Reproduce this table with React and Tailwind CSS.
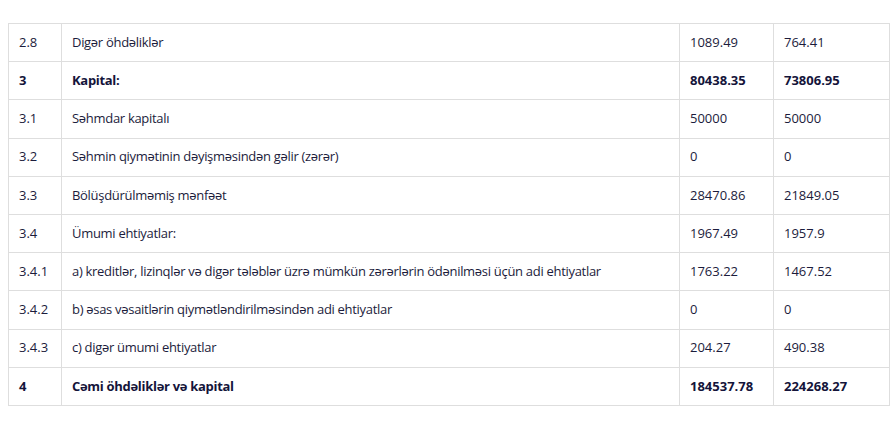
export default function App() {
  const rows = [
    ["2.8", "Digər öhdəliklər", "1089.49", "764.41", false],
    ["3", "Kapital:", "80438.35", "73806.95", true],
    ["3.1", "Səhmdar kapitalı", "50000", "50000", false],
    ["3.2", "Səhmin qiymətinin dəyişməsindən gəlir (zərər)", "0", "0", false],
    ["3.3", "Bölüşdürülməmiş mənfəət", "28470.86", "21849.05", false],
    ["3.4", "Ümumi ehtiyatlar:", "1967.49", "1957.9", false],
    ["3.4.1", "a) kreditlər, lizinqlər və digər tələblər üzrə mümkün zərərlərin ödənilməsi üçün adi ehtiyatlar", "1763.22", "1467.52", false],
    ["3.4.2", "b) əsas vəsaitlərin qiymətləndirilməsindən adi ehtiyatlar", "0", "0", false],
    ["3.4.3", "c) digər ümumi ehtiyatlar", "204.27", "490.38", false],
    ["4", "Cəmi öhdəliklər və kapital", "184537.78", "224268.27", true],
  ];
  return (
    <div className="bg-white w-[893px] h-[432px] pt-[23px] pl-[8px]" style={{ fontFamily: '"Open Sans", "Noto Sans", sans-serif' }}>
      <table className="border-collapse table-fixed w-[881px] text-[13px] text-[#1c1c3c]">
        <colgroup>
          <col className="w-[53px]" />
          <col className="w-[618px]" />
          <col className="w-[94px]" />
          <col className="w-[116px]" />
        </colgroup>
        <tbody>
          {rows.map((r, i) => (
            <tr key={i} className={"h-[38.2px] " + (r[4] ? "font-bold text-[#14143a]" : "")}>
              <td className="border border-[#dedede] pl-[10px] align-middle">{r[0]}</td>
              <td className="border border-[#dedede] pl-[10px] align-middle tracking-[-0.3px]">{r[1]}</td>
              <td className="border border-[#dedede] pl-[10px] align-middle">{r[2]}</td>
              <td className="border border-[#dedede] pl-[10px] align-middle">{r[3]}</td>
            </tr>
          ))}
        </tbody>
      </table>
    </div>
  );
}
